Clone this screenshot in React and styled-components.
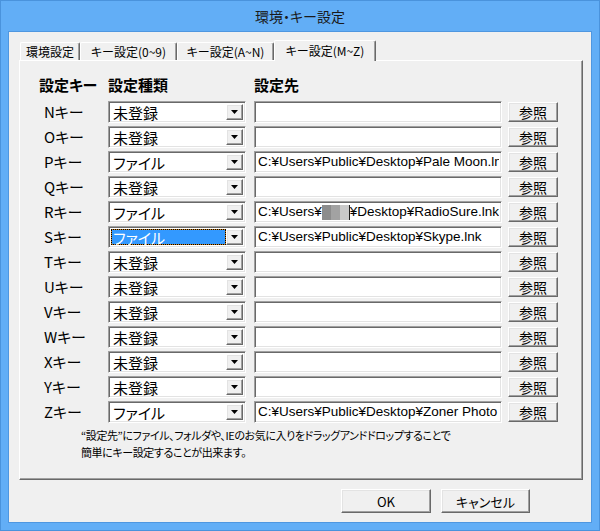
import React from 'react';
import styled, { createGlobalStyle } from 'styled-components';

const GlobalStyle = createGlobalStyle`
    html, body {
        margin: 0;
        padding: 0;
        background: #ffffff;
    }
    body {
        font-family: "Noto Sans CJK JP", sans-serif;
        font-feature-settings: "palt";
    }
`;

const rows = [
    { key: 'N', type: '未登録', path: '' },
    { key: 'O', type: '未登録', path: '' },
    { key: 'P', type: 'ファイル', path: 'C:¥Users¥Public¥Desktop¥Pale Moon.lnk' },
    { key: 'Q', type: '未登録', path: '' },
    { key: 'R', type: 'ファイル', path: 'redacted' },
    { key: 'S', type: 'ファイル', path: 'C:¥Users¥Public¥Desktop¥Skype.lnk', focused: true },
    { key: 'T', type: '未登録', path: '' },
    { key: 'U', type: '未登録', path: '' },
    { key: 'V', type: '未登録', path: '' },
    { key: 'W', type: '未登録', path: '' },
    { key: 'X', type: '未登録', path: '' },
    { key: 'Y', type: '未登録', path: '' },
    { key: 'Z', type: 'ファイル', path: 'C:¥Users¥Public¥Desktop¥Zoner Photo Studio.lnk' },
];

const tabs = [
    { label: '環境設定', width: 60 },
    { label: 'キー設定(0~9)', width: 97 },
    { label: 'キー設定(A~N)', width: 97 },
    { label: 'キー設定(M~Z)', width: 102, active: true },
];

const App = () => {
    return (
        <>
            <GlobalStyle />
            <Window>
                <TitleBar>環境・キー設定</TitleBar>
                <Client>
                    <TabBar>
                        {tabs.map((t) => (
                            <Tab key={t.label} $width={t.width} $active={t.active}>
                                {t.label}
                            </Tab>
                        ))}
                    </TabBar>
                    <Panel>
                        <Grid>
                            <Header>設定キー</Header>
                            <Header>設定種類</Header>
                            <Header>設定先</Header>
                            <span />
                            {rows.map((r) => (
                                <React.Fragment key={r.key}>
                                    <KeyLabel>{r.key}キー</KeyLabel>
                                    <Combo>
                                        <ComboText $focused={r.focused}>{r.type}</ComboText>
                                        <DropButton>
                                            <svg width="7" height="4" viewBox="0 0 7 4">
                                                <polygon points="0,0 7,0 3.5,4" fill="#000" />
                                            </svg>
                                        </DropButton>
                                    </Combo>
                                    <Field>
                                        <FieldText>
                                            {r.path === 'redacted' ? (
                                                <>
                                                    C:¥Users¥
                                                    <Blur $c="#8c8c8c" />
                                                    <Blur $c="#a2a2a2" />
                                                    <Blur $c="#c9c9c9" />
                                                    <Caret />
                                                    ¥Desktop¥RadioSure.lnk
                                                </>
                                            ) : (
                                                r.path
                                            )}
                                        </FieldText>
                                    </Field>
                                    <RefButton>参照</RefButton>
                                </React.Fragment>
                            ))}
                        </Grid>
                        <Note>
                            “設定先”にファイル、フォルダや、IEのお気に入りをドラッグアンドドロップすることで
                            <br />
                            簡単にキー設定することが出来ます。
                        </Note>
                    </Panel>
                    <Footer>
                        <DialogButton $width={90}>OK</DialogButton>
                        <DialogButton $width={89}>キャンセル</DialogButton>
                    </Footer>
                </Client>
            </Window>
        </>
    );
};

const Window = styled.div`
    width: 600px;
    height: 531px;
    box-sizing: border-box;
    background: #62aef6;
    border: 1px solid #4a93dc;
    display: flex;
    flex-direction: column;
`;

const TitleBar = styled.div`
    height: 30px;
    display: flex;
    align-items: center;
    justify-content: center;
    font-size: 14px;
    color: #1a1a1a;
    padding-bottom: 1px;
    box-sizing: border-box;
`;

const Client = styled.div`
    flex: 1;
    margin: 0 7px 7px 7px;
    background: #f0f0f0;
    border: 1px solid #4f97e0;
    padding: 8px 0 0 10px;
    display: flex;
    flex-direction: column;
    box-sizing: border-box;
`;

const TabBar = styled.div`
    display: flex;
    align-items: flex-end;
    height: 20px;
    padding-left: 1px;
`;

const Tab = styled.div`
    width: ${(p) => p.$width}px;
    height: ${(p) => (p.$active ? 21 : 18)}px;
    margin-bottom: ${(p) => (p.$active ? -1 : 0)}px;
    box-sizing: border-box;
    background: #f0f0f0;
    border-top: 1px solid #fff;
    border-left: 1px solid #fff;
    border-right: 1px solid #696969;
    box-shadow: inset -1px 0 0 #a0a0a0;
    border-radius: 2px 2px 0 0;
    font-size: 12px;
    color: #000;
    display: flex;
    align-items: ${(p) => (p.$active ? 'flex-start' : 'center')};
    padding-top: ${(p) => (p.$active ? 1 : 0)}px;
    justify-content: center;
    white-space: nowrap;
    position: relative;
    z-index: ${(p) => (p.$active ? 2 : 0)};
`;

const Panel = styled.div`
    width: 564px;
    height: 420px;
    box-sizing: border-box;
    border-top: 1px solid #fff;
    border-left: 1px solid #fff;
    border-right: 1px solid #696969;
    border-bottom: 1px solid #696969;
    box-shadow: inset -1px -1px 0 #a0a0a0;
    padding: 15px 0 0 19px;
    position: relative;
    z-index: 1;
`;

const Grid = styled.div`
    display: grid;
    grid-template-columns: 69px 146px 254px 50px;
    grid-auto-rows: 22px;
    row-gap: 3px;
    align-items: center;
`;

const Header = styled.div`
    font-size: 15px;
    font-weight: bold;
    color: #000;
    height: 18px;
    line-height: 18px;
    align-self: start;
`;

const KeyLabel = styled.div`
    font-size: 15px;
    color: #000;
    padding-left: 5px;
    line-height: 22px;
`;

const sunken = `
    box-sizing: border-box;
    border-style: solid;
    border-width: 1px;
    border-color: #a0a0a0 #fff #fff #a0a0a0;
    box-shadow: inset 1px 1px 0 #696969, inset -1px -1px 0 #e3e3e3;
    background: #fff;
`;

const raised = `
    box-sizing: border-box;
    border-style: solid;
    border-width: 1px;
    border-color: #fff #696969 #696969 #fff;
    box-shadow: inset -1px -1px 0 #a0a0a0, inset 1px 1px 0 #e3e3e3;
    background: #f0f0f0;
`;

const Combo = styled.div`
    ${sunken}
    width: 138px;
    height: 22px;
    padding: 2px;
    display: flex;
    align-items: stretch;
`;

const ComboText = styled.div`
    flex: 1;
    font-size: 15px;
    line-height: 16px;
    padding: 0 1px;
    box-sizing: border-box;
    color: ${(p) => (p.$focused ? '#fff' : '#000')};
    border: 1px solid transparent;
    ${(p) =>
        p.$focused &&
        `
        border: 1px dotted #000;
        background: linear-gradient(#3399ff, #3399ff) padding-box, #c98120;
    `}
`;

const DropButton = styled.div`
    ${raised}
    width: 17px;
    display: flex;
    align-items: center;
    justify-content: center;
`;

const Field = styled.div`
    ${sunken}
    width: 248px;
    height: 22px;
    padding: 0 2px 0 3px;
    overflow: hidden;
    display: flex;
    align-items: center;
`;

const FieldText = styled.div`
    flex: 1;
    min-width: 0;
    overflow: hidden;
    font-family: "Liberation Sans", "Noto Sans CJK JP", sans-serif;
    font-size: 13.5px;
    line-height: 18px;
    color: #000;
    white-space: nowrap;
    display: flex;
    align-items: center;
`;

const Blur = styled.span`
    display: inline-block;
    flex: none;
    width: 9px;
    height: 15px;
    background: ${(p) => p.$c};
`;

const Caret = styled.span`
    display: inline-block;
    flex: none;
    width: 1px;
    height: 15px;
    background: #222;
`;

const RefButton = styled.button`
    ${raised}
    width: 50px;
    height: 20px;
    padding: 0;
    font-family: "Noto Sans CJK JP", sans-serif;
    font-size: 14px;
    line-height: 16px;
    color: #000;
`;

const Note = styled.div`
    margin: 4px 0 0 42px;
    font-size: 11px;
    line-height: 17px;
    color: #000;
    letter-spacing: -0.4px;
`;

const Footer = styled.div`
    display: flex;
    gap: 10px;
    padding-left: 322px;
    margin-top: 9px;
`;

const DialogButton = styled.button`
    ${raised}
    width: ${(p) => p.$width}px;
    height: 24px;
    padding: 0;
    font-family: "Noto Sans CJK JP", sans-serif;
    font-feature-settings: "palt";
    font-size: 13px;
    color: #000;
`;

export default App;
